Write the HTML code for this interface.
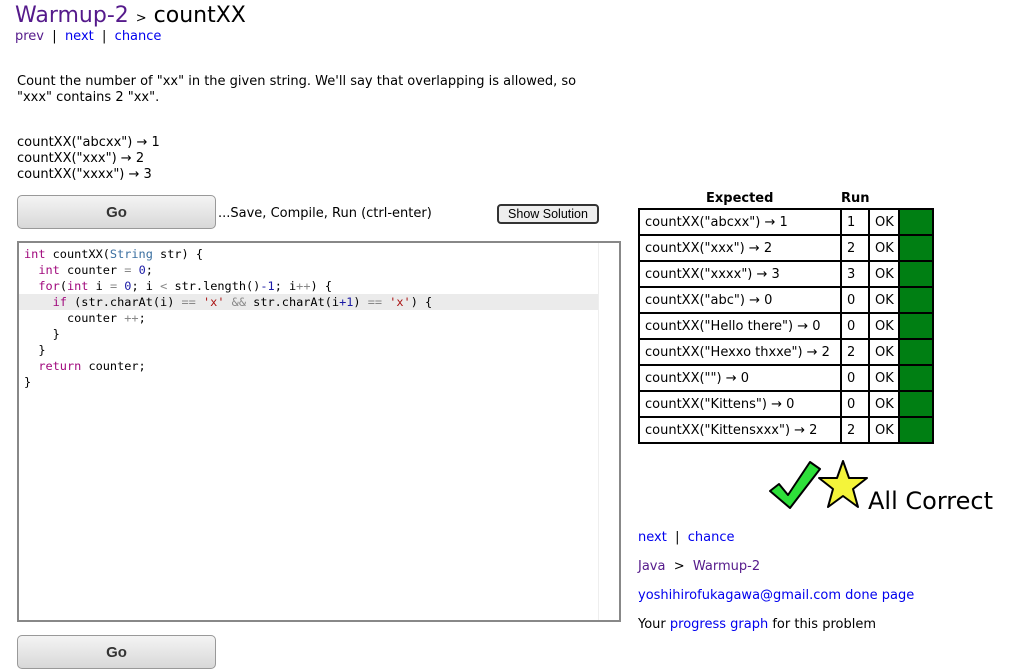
<!DOCTYPE html>
<html><head><meta charset="utf-8"><style>
body{margin:0;width:1020px;height:661px;overflow:hidden;background:#fff;font-family:"DejaVu Sans","Liberation Sans",sans-serif;font-size:13px;color:#000;position:relative}
.a{position:absolute;white-space:nowrap}
.p{color:#551a8b}.b{color:#0000ee}
.go{position:absolute;left:17px;width:199px;height:34px;border:1px solid #999;border-radius:5px;background:linear-gradient(#f4f4f4,#d8d8d8);font-family:"Liberation Sans",sans-serif;font-weight:bold;font-size:15px;color:#333;text-align:center;line-height:33px;box-sizing:border-box}
.code{position:absolute;left:17px;top:241px;width:604px;height:381px;border:2px solid #888;box-sizing:border-box}
.code pre{margin:0;position:absolute;left:5px;top:3px;font-family:"DejaVu Sans Mono","Liberation Mono",monospace;font-size:11.9px;line-height:16px}
.k{color:#a0087c}.t{color:#3a6fa0}.n{color:#1a1aa6}.s{color:#a11}.o{color:#888}
table{position:absolute;left:638px;top:208px;border-collapse:collapse;table-layout:fixed;width:294px}
td{border:2px solid #000;height:24px;padding:0 0 0 5px;font-size:13px;white-space:nowrap;overflow:hidden;box-sizing:border-box}
tr{height:26px}
</style></head><body>
<div class="a" style="left:15px;top:3px;font-size:22px"><span class="p">Warmup-2</span> <span style="font-size:13px">&gt;</span> countXX</div>
<div class="a" style="left:15px;top:29px"><span class="p">prev</span> &nbsp;|&nbsp; <span class="b">next</span> &nbsp;|&nbsp; <span class="b">chance</span></div>
<div class="a" style="left:17px;top:74px;line-height:16px">Count the number of "xx" in the given string. We'll say that overlapping is allowed, so<br>"xxx" contains 2 "xx".</div>
<div class="a" style="left:17px;top:135px;line-height:16px">countXX("abcxx") → 1<br>countXX("xxx") → 2<br>countXX("xxxx") → 3</div>
<div class="go" style="top:195px">Go</div>
<div class="a" style="left:218px;top:206px">...Save, Compile, Run (ctrl-enter)</div>
<div class="a" style="left:497px;top:204px;width:102px;height:20px;border:2px solid #333;border-radius:4px;background:#eee;box-sizing:border-box;font-family:'Liberation Sans',sans-serif;font-size:12.5px;text-align:center;line-height:16px">Show Solution</div>
<div class="code">
<div style="position:absolute;left:0;right:20px;top:51px;height:16px;background:#ebebeb"></div>
<div style="position:absolute;right:20px;top:0;bottom:0;width:1px;background:#eee"></div>
<pre><span class="k">int</span> countXX(<span class="t">String</span> str) {
  <span class="k">int</span> counter <span class="o">=</span> <span class="n">0</span>;
  <span class="k">for</span>(<span class="k">int</span> i <span class="o">=</span> <span class="n">0</span>; i <span class="o">&lt;</span> str.length()<span class="n">-1</span>; i<span class="o">++</span>) {
    <span class="k">if</span> (str.charAt(i) <span class="o">==</span> <span class="s">'x'</span> <span class="o">&amp;&amp;</span> str.charAt(i<span class="n">+1</span>) <span class="o">==</span> <span class="s">'x'</span>) {
      counter <span class="o">++</span>;
    }
  }
  <span class="k">return</span> counter;
}</pre></div>
<div class="go" style="top:635px">Go</div>
<div class="a" style="left:706px;top:191px;font-weight:bold">Expected</div>
<div class="a" style="left:841px;top:191px;font-weight:bold">Run</div>
<table>
<colgroup><col style="width:202px"><col style="width:28px"><col style="width:30px"><col style="width:34px"></colgroup>
<tr><td>countXX("abcxx") → 1</td><td>1</td><td>OK</td><td style="background:#007f13"></td></tr>
<tr><td>countXX("xxx") → 2</td><td>2</td><td>OK</td><td style="background:#007f13"></td></tr>
<tr><td>countXX("xxxx") → 3</td><td>3</td><td>OK</td><td style="background:#007f13"></td></tr>
<tr><td>countXX("abc") → 0</td><td>0</td><td>OK</td><td style="background:#007f13"></td></tr>
<tr><td>countXX("Hello there") → 0</td><td>0</td><td>OK</td><td style="background:#007f13"></td></tr>
<tr><td>countXX("Hexxo thxxe") → 2</td><td>2</td><td>OK</td><td style="background:#007f13"></td></tr>
<tr><td>countXX("") → 0</td><td>0</td><td>OK</td><td style="background:#007f13"></td></tr>
<tr><td>countXX("Kittens") → 0</td><td>0</td><td>OK</td><td style="background:#007f13"></td></tr>
<tr><td>countXX("Kittensxxx") → 2</td><td>2</td><td>OK</td><td style="background:#007f13"></td></tr>
</table>
<svg class="a" style="left:768px;top:458px" width="100" height="55" viewBox="0 0 100 55">
<path d="M2 33 L11 26 L20 37 L42 4 L52 11 L22 50 Z" fill="#2ee03a" stroke="#000" stroke-width="2" stroke-linejoin="round"/>
<path d="M75 3 L81 20 L99 20 L85 31 L90 49 L75 38 L60 49 L65 31 L51 20 L69 20 Z" fill="#f4f43a" stroke="#000" stroke-width="2" stroke-linejoin="round"/>
</svg>
<div class="a" style="left:868px;top:487px;font-size:24px;font-family:'DejaVu Sans',sans-serif">All Correct</div>
<div class="a" style="left:638px;top:530px"><span class="b">next</span> &nbsp;|&nbsp; <span class="b">chance</span></div>
<div class="a" style="left:638px;top:559px"><span class="p">Java</span> &nbsp;&gt;&nbsp; <span class="p">Warmup-2</span></div>
<div class="a b" style="left:638px;top:588px">yoshihirofukagawa@gmail.com done page</div>
<div class="a" style="left:638px;top:617px">Your <span class="b">progress graph</span> for this problem</div>
</body></html>
